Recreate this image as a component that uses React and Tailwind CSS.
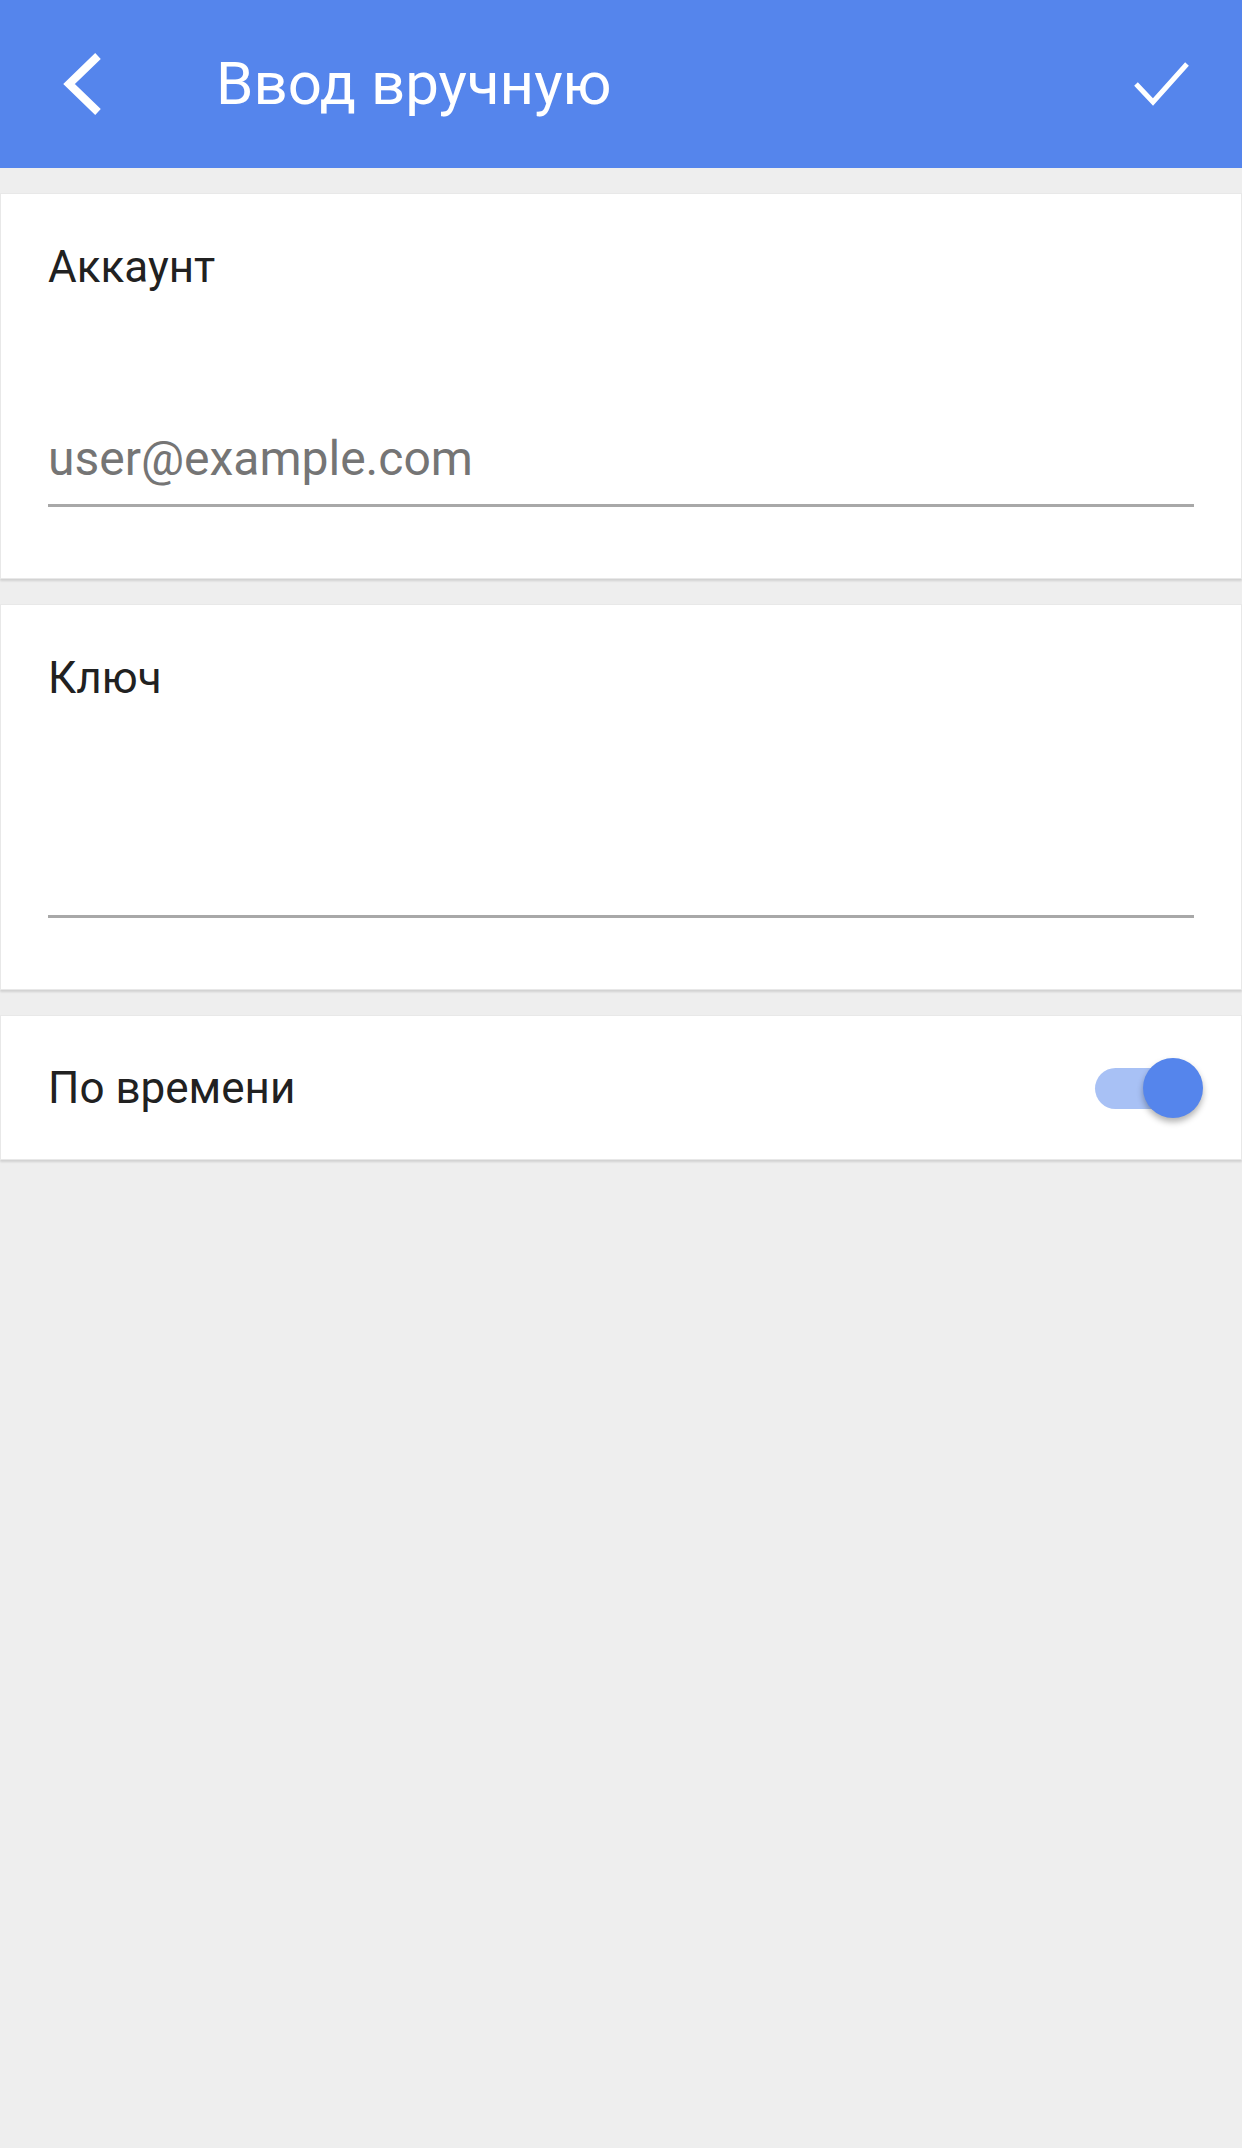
import { useState } from 'react';

function Field({ label, placeholder }) {
  return (
    <div className="bg-white border border-[#e8e8e8] shadow-[0_2px_2px_rgba(0,0,0,0.12)] pt-[51px] pb-[71px] px-[47px]">
      <div className="text-[44px] leading-[44px] text-[#212121]">{label}</div>
      <input
        className="mt-[142px] w-full text-[48px] leading-[56px] h-[56px] text-[#212121] placeholder:text-[#757575] outline-none bg-transparent"
        placeholder={placeholder}
      />
      <div className="mt-[17px] h-[3px] bg-[#a8a8a8]" />
    </div>
  );
}

export default function App() {
  const [totp, setTotp] = useState(true);

  return (
    <div className="min-h-[2148px] bg-[#eeeeee] font-['Roboto',sans-serif]">
      {/* Toolbar */}
      <header className="h-[168px] bg-[#5585ec] flex items-center text-white">
        <button className="ml-[58px] w-[50px] h-[64px] flex items-center justify-center">
          <svg width="50" height="64" viewBox="0 0 50 64" fill="none">
            <path d="M40 4 L11 32 L40 60" stroke="white" strokeWidth="8" />
          </svg>
        </button>
        <h1 className="ml-[108px] text-[60px] leading-none font-normal">Ввод вручную</h1>
        <button className="ml-auto mr-[52px] w-[60px] h-[48px] flex items-center justify-center">
          <svg width="60" height="48" viewBox="0 0 60 48" fill="none">
            <path d="M6 24 L23 42 L57 4" stroke="white" strokeWidth="5" />
          </svg>
        </button>
      </header>

      <div className="pt-[25px] flex flex-col gap-[25px]">
        <Field label="Аккаунт" placeholder="user@example.com" />
        <Field label="Ключ" placeholder="" />

        {/* Time-based toggle */}
        <div className="bg-white border border-[#e8e8e8] shadow-[0_2px_2px_rgba(0,0,0,0.12)] h-[145px] flex items-center justify-between pl-[47px] pr-[38px]">
          <span className="text-[44px] leading-[44px] text-[#212121]">По времени</span>
          <button onClick={() => setTotp(!totp)} className="relative w-[110px] h-[60px]">
            <span
              className={`absolute left-[2px] top-[10px] w-[90px] h-[41px] rounded-full ${totp ? 'bg-[#a8c1f5]' : 'bg-[#bdbdbd]'}`}
            />
            <span
              className={`absolute top-0 w-[60px] h-[60px] rounded-full shadow-[0_4px_6px_rgba(0,0,0,0.3)] ${totp ? 'left-[50px] bg-[#5585ec]' : 'left-0 bg-[#fafafa]'}`}
            />
          </button>
        </div>
      </div>
    </div>
  );
}
